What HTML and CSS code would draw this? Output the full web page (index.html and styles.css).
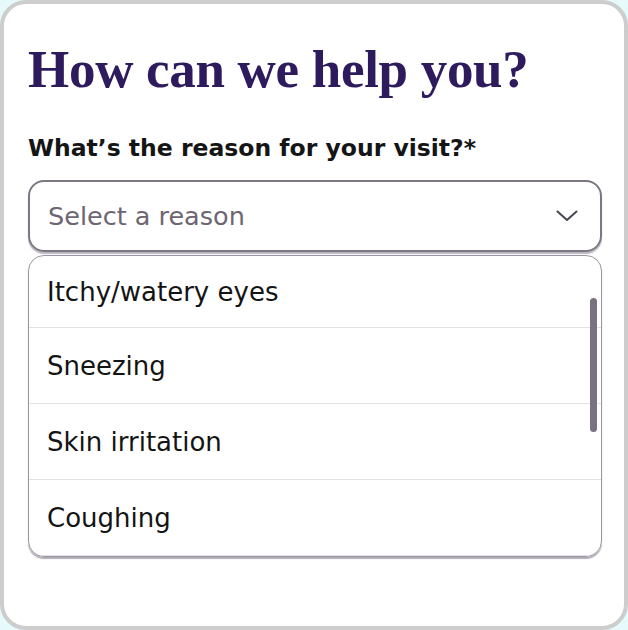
FILE: index.html
```html
<!DOCTYPE html>
<html lang="en">
  <head>
    <meta charset="utf-8" />
    <title>Reason for visit</title>
    <link rel="stylesheet" href="styles.css">
  </head>
  <body>
    <div class="card">
      <h1 class="title">How can we help you?</h1>
      <label class="field-label" for="reason">What’s the reason for your visit?*</label>
      <div class="select" id="reason">
        <span class="placeholder">Select a reason</span>
        <svg class="chevron" width="22" height="12" viewBox="0 0 22 12" fill="none">
          <path d="M1.5 1.5 L11 10 L20.5 1.5" stroke="#4a4450" stroke-width="2" stroke-linecap="round" stroke-linejoin="round" />
        </svg>
      </div>
      <div class="options">
        <div class="option">Itchy/watery eyes</div>
        <div class="option">Sneezing</div>
        <div class="option">Skin irritation</div>
        <div class="option">Coughing</div>
        <div class="scrollbar"></div>
      </div>
    </div>
  </body>
</html>
```

FILE: styles.css
```css
* {
  margin: 0;
  padding: 0;
  box-sizing: border-box;
}

body {
  background: #e6fafc;
  font-family: 'DejaVu Sans', 'Noto Sans', sans-serif;
}

.card {
  width: 628px;
  height: 630px;
  background: #ffffff;
  border: 4px solid #cdcdcd;
  border-radius: 26px;
  padding: 35px 22px 0 24px;
}

.title {
  font-family: 'Liberation Serif', serif;
  font-weight: 700;
  font-size: 53px;
  line-height: 60px;
  letter-spacing: -0.3px;
  color: #2d1b5e;
}

.field-label {
  display: block;
  margin-top: 34px;
  font-weight: 700;
  font-size: 23.5px;
  line-height: 30px;
  color: #151515;
}

.select {
  margin-top: 17px;
  height: 72px;
  border: 2px solid #7d7683;
  border-radius: 16px;
  box-shadow: 0 2px 1px rgba(60, 50, 70, 0.35);
  display: flex;
  align-items: center;
  justify-content: space-between;
  padding: 0 22px 0 18px;
}

.placeholder {
  font-size: 25.5px;
  color: #6d6672;
}

.options {
  position: relative;
  margin-top: 3px;
  border: 1.5px solid #9c96a2;
  border-radius: 16px;
  box-shadow: 0 2px 1px rgba(60, 50, 70, 0.4);
  overflow: hidden;
}

.option {
  height: 76px;
  display: flex;
  align-items: center;
  padding-left: 18px;
  font-size: 26px;
  color: #141414;
  border-bottom: 1.5px solid #e3e0e6;
}

.option:first-child {
  height: 72px;
}

.option:last-child {
  border-bottom: none;
}

.scrollbar {
  position: absolute;
  top: 42px;
  right: 4px;
  width: 7px;
  height: 134px;
  border-radius: 4px;
  background: #7a7080;
}
```
